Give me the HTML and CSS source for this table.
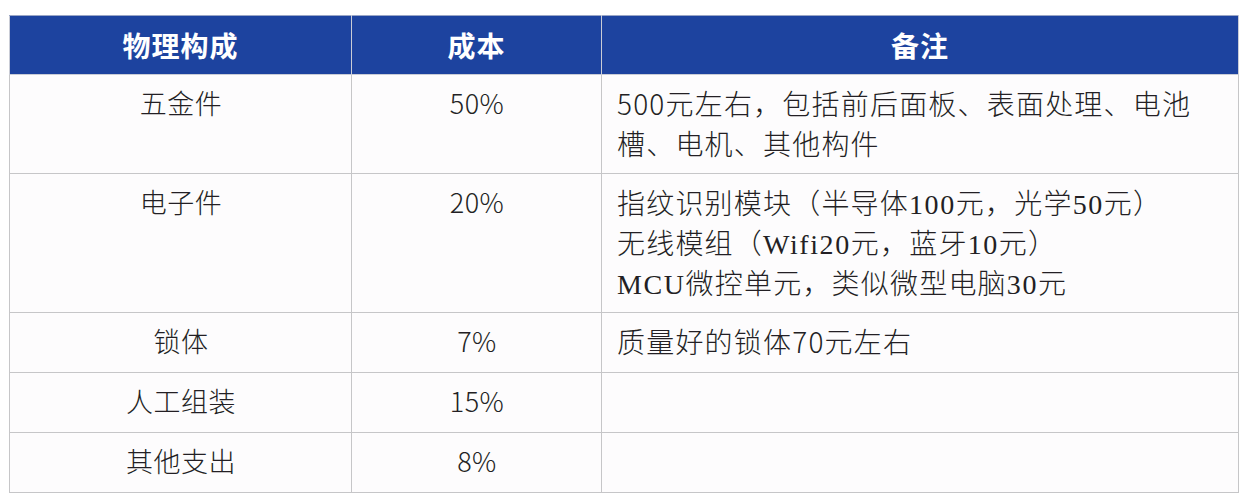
FILE: index.html
```html
<!DOCTYPE html>
<html lang="zh-CN">
<head>
<meta charset="utf-8">
<title>成本构成</title>
<link rel="stylesheet" href="styles.css">
</head>
<body>
<table class="cost">
  <colgroup>
    <col class="c1">
    <col class="c2">
    <col class="c3">
  </colgroup>
  <thead>
    <tr>
      <th>物理构成</th>
      <th>成本</th>
      <th>备注</th>
    </tr>
  </thead>
  <tbody>
    <tr>
      <td class="center">五金件</td>
      <td class="center">50%</td>
      <td>500元左右，包括前后面板、表面处理、电池<br>槽、电机、其他构件</td>
    </tr>
    <tr>
      <td class="center">电子件</td>
      <td class="center">20%</td>
      <td>指纹识别模块（半导体<span class="serif">100</span>元，光学<span class="serif">50</span>元）<br>无线模组（<span class="serif">Wifi20</span>元，蓝牙<span class="serif">10</span>元）<br><span class="serif">MCU</span>微控单元，类似微型电脑<span class="serif">30</span>元</td>
    </tr>
    <tr>
      <td class="center">锁体</td>
      <td class="center">7%</td>
      <td>质量好的锁体70元左右</td>
    </tr>
    <tr>
      <td class="center">人工组装</td>
      <td class="center">15%</td>
      <td></td>
    </tr>
    <tr>
      <td class="center">其他支出</td>
      <td class="center">8%</td>
      <td></td>
    </tr>
  </tbody>
</table>
</body>
</html>
```

FILE: styles.css
```css
html, body {
  margin: 0;
  background: #ffffff;
}
body {
  padding: 15px 8px 0 9px;
  font-family: "Noto Sans CJK SC", "Noto Sans", sans-serif;
  color: #231f24;
}
.cost {
  border-collapse: collapse;
  width: 1229px;
  table-layout: fixed;
  background: #fdfcfd;
}
.c1 { width: 342px; }
.c2 { width: 250px; }
.c3 { width: 637px; }
.cost th {
  height: 59px;
  padding: 0;
  box-sizing: border-box;
  background: #1d439f;
  color: #ffffff;
  font-size: 28px;
  font-weight: 700;
  letter-spacing: 1px;
  line-height: 30px;
  text-align: center;
  vertical-align: middle;
  border: 1px solid #c9ccd6;
  border-top-color: #9aa6c6;
}
.cost td {
  border: 1px solid #c6c6c8;
  padding: 8px 14px 10px 15px;
  font-size: 28px;
  font-weight: 300;
  letter-spacing: 1.2px;
  line-height: 40px;
  vertical-align: top;
  text-align: left;
}
.cost td.center {
  text-align: center;
  font-size: 27px;
  letter-spacing: 0.5px;
}
.cost tbody tr:nth-child(n+3) td {
  height: 41px;
}
.serif {
  font-family: "Liberation Serif", serif;
  font-size: 28px;
  letter-spacing: 1.6px;
  line-height: 1;
}
```
